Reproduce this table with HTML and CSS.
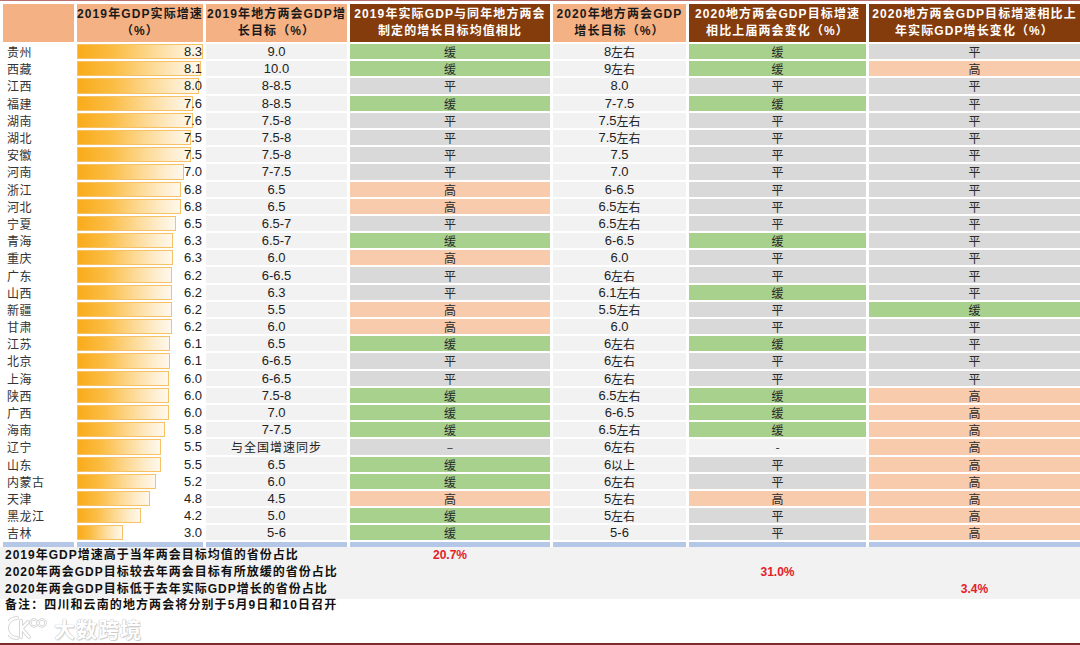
FILE: index.html
```html
<!DOCTYPE html>
<html lang="zh-CN">
<head>
<meta charset="utf-8">
<title>各省两会GDP目标</title>
<link rel="stylesheet" href="styles.css">
</head>
<body>
<div class="page">
  <div class="topline"></div>
  <div class="table">
    <div class="h hs"></div>
    <div class="h hs">2019年GDP实际增速<br>（%）</div>
    <div class="h hs">2019年地方两会GDP增<br>长目标（%）</div>
    <div class="h hb">2019年实际GDP与同年地方两会<br>制定的增长目标均值相比</div>
    <div class="h hs">2020年地方两会GDP<br>增长目标（%）</div>
    <div class="h hb">2020地方两会GDP目标增速<br>相比上届两会变化（%）</div>
    <div class="h hb">2020地方两会GDP目标增速相比上<br>年实际GDP增长变化（%）</div>

    <div class="c p">贵州</div><div class="c b"><div class="bar" style="width:126px"></div><span class="v">8.3</span></div><div class="c n">9.0</div><div class="c g">缓</div><div class="c n">8<span class="cj">左右</span></div><div class="c g">缓</div><div class="c y">平</div>
    <div class="c p">西藏</div><div class="c b"><div class="bar" style="width:124px"></div><span class="v">8.1</span></div><div class="c n">10.0</div><div class="c g">缓</div><div class="c n">9<span class="cj">左右</span></div><div class="c g">缓</div><div class="c s">高</div>
    <div class="c p">江西</div><div class="c b"><div class="bar" style="width:122px"></div><span class="v">8.0</span></div><div class="c n">8-8.5</div><div class="c y">平</div><div class="c n">8.0</div><div class="c y">平</div><div class="c y">平</div>
    <div class="c p">福建</div><div class="c b"><div class="bar" style="width:116px"></div><span class="v">7.6</span></div><div class="c n">8-8.5</div><div class="c g">缓</div><div class="c n">7-7.5</div><div class="c g">缓</div><div class="c y">平</div>
    <div class="c p">湖南</div><div class="c b"><div class="bar" style="width:116px"></div><span class="v">7.6</span></div><div class="c n">7.5-8</div><div class="c y">平</div><div class="c n">7.5<span class="cj">左右</span></div><div class="c y">平</div><div class="c y">平</div>
    <div class="c p">湖北</div><div class="c b"><div class="bar" style="width:114px"></div><span class="v">7.5</span></div><div class="c n">7.5-8</div><div class="c y">平</div><div class="c n">7.5<span class="cj">左右</span></div><div class="c y">平</div><div class="c y">平</div>
    <div class="c p">安徽</div><div class="c b"><div class="bar" style="width:114px"></div><span class="v">7.5</span></div><div class="c n">7.5-8</div><div class="c y">平</div><div class="c n">7.5</div><div class="c y">平</div><div class="c y">平</div>
    <div class="c p">河南</div><div class="c b"><div class="bar" style="width:107px"></div><span class="v">7.0</span></div><div class="c n">7-7.5</div><div class="c y">平</div><div class="c n">7.0</div><div class="c y">平</div><div class="c y">平</div>
    <div class="c p">浙江</div><div class="c b"><div class="bar" style="width:104px"></div><span class="v">6.8</span></div><div class="c n">6.5</div><div class="c s">高</div><div class="c n">6-6.5</div><div class="c y">平</div><div class="c y">平</div>
    <div class="c p">河北</div><div class="c b"><div class="bar" style="width:104px"></div><span class="v">6.8</span></div><div class="c n">6.5</div><div class="c s">高</div><div class="c n">6.5<span class="cj">左右</span></div><div class="c y">平</div><div class="c y">平</div>
    <div class="c p">宁夏</div><div class="c b"><div class="bar" style="width:99px"></div><span class="v">6.5</span></div><div class="c n">6.5-7</div><div class="c y">平</div><div class="c n">6.5<span class="cj">左右</span></div><div class="c y">平</div><div class="c y">平</div>
    <div class="c p">青海</div><div class="c b"><div class="bar" style="width:96px"></div><span class="v">6.3</span></div><div class="c n">6.5-7</div><div class="c g">缓</div><div class="c n">6-6.5</div><div class="c g">缓</div><div class="c y">平</div>
    <div class="c p">重庆</div><div class="c b"><div class="bar" style="width:96px"></div><span class="v">6.3</span></div><div class="c n">6.0</div><div class="c s">高</div><div class="c n">6.0</div><div class="c y">平</div><div class="c y">平</div>
    <div class="c p">广东</div><div class="c b"><div class="bar" style="width:95px"></div><span class="v">6.2</span></div><div class="c n">6-6.5</div><div class="c y">平</div><div class="c n">6<span class="cj">左右</span></div><div class="c y">平</div><div class="c y">平</div>
    <div class="c p">山西</div><div class="c b"><div class="bar" style="width:95px"></div><span class="v">6.2</span></div><div class="c n">6.3</div><div class="c y">平</div><div class="c n">6.1<span class="cj">左右</span></div><div class="c g">缓</div><div class="c y">平</div>
    <div class="c p">新疆</div><div class="c b"><div class="bar" style="width:95px"></div><span class="v">6.2</span></div><div class="c n">5.5</div><div class="c s">高</div><div class="c n">5.5<span class="cj">左右</span></div><div class="c y">平</div><div class="c g">缓</div>
    <div class="c p">甘肃</div><div class="c b"><div class="bar" style="width:95px"></div><span class="v">6.2</span></div><div class="c n">6.0</div><div class="c s">高</div><div class="c n">6.0</div><div class="c y">平</div><div class="c y">平</div>
    <div class="c p">江苏</div><div class="c b"><div class="bar" style="width:93px"></div><span class="v">6.1</span></div><div class="c n">6.5</div><div class="c g">缓</div><div class="c n">6<span class="cj">左右</span></div><div class="c g">缓</div><div class="c y">平</div>
    <div class="c p">北京</div><div class="c b"><div class="bar" style="width:93px"></div><span class="v">6.1</span></div><div class="c n">6-6.5</div><div class="c y">平</div><div class="c n">6<span class="cj">左右</span></div><div class="c y">平</div><div class="c y">平</div>
    <div class="c p">上海</div><div class="c b"><div class="bar" style="width:92px"></div><span class="v">6.0</span></div><div class="c n">6-6.5</div><div class="c y">平</div><div class="c n">6<span class="cj">左右</span></div><div class="c y">平</div><div class="c y">平</div>
    <div class="c p">陕西</div><div class="c b"><div class="bar" style="width:92px"></div><span class="v">6.0</span></div><div class="c n">7.5-8</div><div class="c g">缓</div><div class="c n">6.5<span class="cj">左右</span></div><div class="c g">缓</div><div class="c s">高</div>
    <div class="c p">广西</div><div class="c b"><div class="bar" style="width:92px"></div><span class="v">6.0</span></div><div class="c n">7.0</div><div class="c g">缓</div><div class="c n">6-6.5</div><div class="c g">缓</div><div class="c s">高</div>
    <div class="c p">海南</div><div class="c b"><div class="bar" style="width:88px"></div><span class="v">5.8</span></div><div class="c n">7-7.5</div><div class="c g">缓</div><div class="c n">6.5<span class="cj">左右</span></div><div class="c g">缓</div><div class="c s">高</div>
    <div class="c p">辽宁</div><div class="c b"><div class="bar" style="width:84px"></div><span class="v">5.5</span></div><div class="c n"><span class="cj wide">与全国增速同步</span></div><div class="c y">–</div><div class="c n">6<span class="cj">左右</span></div><div class="c l">-</div><div class="c s">高</div>
    <div class="c p">山东</div><div class="c b"><div class="bar" style="width:84px"></div><span class="v">5.5</span></div><div class="c n">6.5</div><div class="c g">缓</div><div class="c n">6<span class="cj">以上</span></div><div class="c y">平</div><div class="c s">高</div>
    <div class="c p">内蒙古</div><div class="c b"><div class="bar" style="width:79px"></div><span class="v">5.2</span></div><div class="c n">6.0</div><div class="c g">缓</div><div class="c n">6<span class="cj">左右</span></div><div class="c y">平</div><div class="c s">高</div>
    <div class="c p">天津</div><div class="c b"><div class="bar" style="width:73px"></div><span class="v">4.8</span></div><div class="c n">4.5</div><div class="c s">高</div><div class="c n">5<span class="cj">左右</span></div><div class="c s">高</div><div class="c s">高</div>
    <div class="c p">黑龙江</div><div class="c b"><div class="bar" style="width:64px"></div><span class="v">4.2</span></div><div class="c n">5.0</div><div class="c g">缓</div><div class="c n">5<span class="cj">左右</span></div><div class="c y">平</div><div class="c s">高</div>
    <div class="c p">吉林</div><div class="c b"><div class="bar" style="width:46px"></div><span class="v">3.0</span></div><div class="c n">5-6</div><div class="c g">缓</div><div class="c n">5-6</div><div class="c y">平</div><div class="c s">高</div>
  </div>
  <div class="stripe">
    <div></div><div></div><div></div><div></div><div></div><div></div><div></div>
  </div>
  <div class="summary">
    <div class="srow"><div class="label">2019年GDP增速高于当年两会目标均值的省份占比</div><div class="val c4">20.7%</div></div>
    <div class="srow"><div class="label">2020年两会GDP目标较去年两会目标有所放缓的省份占比</div><div class="val c6">31.0%</div></div>
    <div class="srow"><div class="label">2020年两会GDP目标低于去年实际GDP增长的省份占比</div><div class="val c7">3.4%</div></div>
  </div>
  <div class="note">备注：四川和云南的地方两会将分别于5月9日和10日召开</div>
  <div class="wm">
    <svg class="logo" width="40" height="26" viewBox="0 0 40 26">
      <path d="M9 3 A10 10 0 0 0 9 23" fill="none" stroke="#d6d6d6" stroke-width="4" stroke-linecap="round"/>
      <path d="M9 3 A10 10 0 0 0 9 23" fill="none" stroke="#ffffff" stroke-width="2" stroke-linecap="round"/>
      <path d="M13 6 L13 22 M13 14 L20 7 M14 14 L21 22" fill="none" stroke="#d6d6d6" stroke-width="4" stroke-linecap="round"/>
      <path d="M13 6 L13 22 M13 14 L20 7 M14 14 L21 22" fill="none" stroke="#ffffff" stroke-width="2" stroke-linecap="round"/>
      <circle cx="26" cy="8" r="3.5" fill="none" stroke="#d0d0d0" stroke-width="2.5"/>
      <circle cx="34" cy="8" r="3.5" fill="none" stroke="#d0d0d0" stroke-width="2.5"/>
      <circle cx="26" cy="8" r="3.5" fill="none" stroke="#ffffff" stroke-width="1"/>
      <circle cx="34" cy="8" r="3.5" fill="none" stroke="#ffffff" stroke-width="1"/>
    </svg>
    <span class="wmtext">大数跨境</span>
  </div>
  <div class="bottomline"></div>
</div>
</body>
</html>
```
FILE: styles.css
```css
html, body {
  margin: 0;
  padding: 0;
  background: #ffffff;
}
body {
  width: 1080px;
  height: 645px;
  overflow: hidden;
  font-family: "Liberation Sans", "Noto Sans CJK SC", sans-serif;
  color: #1e1e1e;
}
.page {
  display: flex;
  flex-direction: column;
  height: 645px;
}
.topline {
  height: 1px;
  background: #b87070;
  margin-bottom: 3px;
}
.table, .stripe, .srow {
  display: grid;
  grid-template-columns: 71px 126px 141px 200px 133px 177px 211px;
  column-gap: 3px;
  padding-left: 3px;
}
.table {
  grid-template-rows: 38px;
  grid-auto-rows: 15.2px;
  row-gap: 2px;
}
.h {
  display: flex;
  align-items: center;
  justify-content: center;
  text-align: center;
  font-weight: bold;
  font-size: 12px;
  line-height: 17px;
  letter-spacing: 1.1px;
  white-space: nowrap;
}
.hs {
  background: #f4b183;
  color: #1a1a1a;
}
.hb {
  background: #843c0c;
  color: #ffffff;
}
.c {
  display: flex;
  align-items: center;
  justify-content: center;
  font-size: 12px;
  line-height: 15px;
  white-space: nowrap;
  color: #2a2a2a;
  font-family: "Noto Sans CJK SC", sans-serif;
}
.p {
  justify-content: flex-start;
  padding-left: 4px;
  color: #333333;
  background: #ffffff;
  letter-spacing: 0.5px;
}
.b {
  display: grid;
  align-items: stretch;
  justify-content: stretch;
}
.bar {
  grid-area: 1 / 1;
  justify-self: start;
  box-sizing: border-box;
  height: 100%;
  border: 1px solid #f6c265;
  background: linear-gradient(90deg, #f9ab1a 0%, #fbbd45 30%, #fdd993 60%, #feeed0 85%, #fff8ec 100%);
}
.v {
  grid-area: 1 / 1;
  justify-self: end;
  align-self: center;
  padding-right: 1px;
  font-family: "Liberation Sans", sans-serif;
  font-size: 13px;
  color: #222222;
}
.n {
  background: #f2f2f2;
  font-family: "Liberation Sans", "Noto Sans CJK SC", sans-serif;
  font-size: 13px;
  color: #222222;
}
.cj {
  font-family: "Noto Sans CJK SC", sans-serif;
  font-size: 12px;
}
.wide {
  letter-spacing: 1px;
}
.g { background: #a9d18e; }
.y { background: #d9d9d9; }
.s { background: #f8cbad; }
.l { background: #f2f2f2; }
.stripe {
  margin-top: 2px;
  height: 5px;
}
.stripe div {
  background: #b4c7e7;
}
.summary {
  background: #f2f2f2;
  padding-bottom: 1px;
}
.srow {
  height: 17px;
  line-height: 17px;
  font-weight: bold;
  font-size: 12px;
  letter-spacing: 1px;
}
.label {
  grid-column: 1 / 4;
  padding-left: 2px;
  white-space: nowrap;
  color: #111111;
}
.val {
  text-align: center;
  color: #e3202a;
  letter-spacing: 0;
}
.c4 { grid-column: 4; }
.c6 { grid-column: 6; }
.c7 { grid-column: 7; }
.note {
  height: 13px;
  line-height: 13px;
  font-weight: bold;
  font-size: 12px;
  letter-spacing: 1.1px;
  padding-left: 5px;
  color: #111111;
}
.wm {
  flex: 1;
  display: flex;
  align-items: center;
  gap: 6px;
  padding-left: 8px;
}
.wmtext {
  font-family: "Noto Sans CJK SC", sans-serif;
  font-weight: bold;
  font-size: 21px;
  color: #ffffff;
  text-shadow: 0 0 1px #bdbdbd, 0 0 1px #bdbdbd, 1px 1px 1px #d0d0d0;
  letter-spacing: 1px;
}
.bottomline {
  height: 2px;
  background: #7b2b2b;
}
```
